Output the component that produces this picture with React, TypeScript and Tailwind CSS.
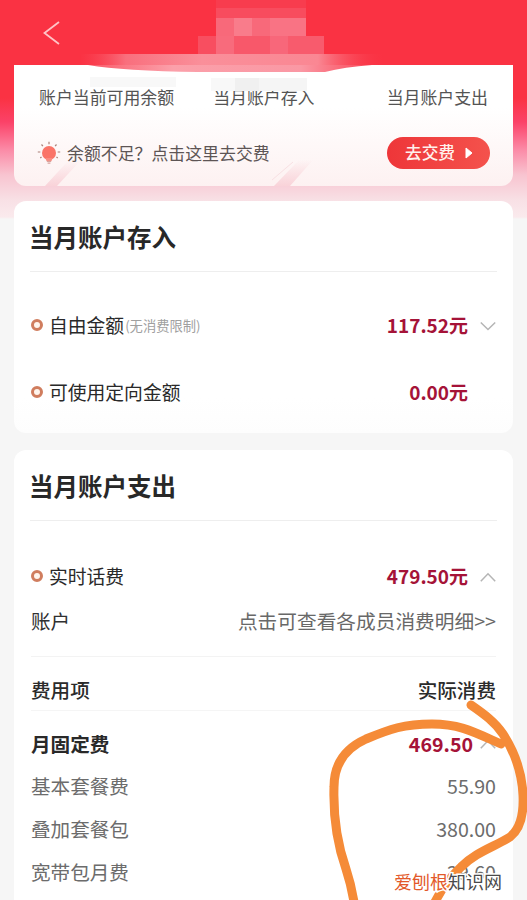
import type React from "react"

interface FeeItem {
  name: string
  amount: string
}

const feeItems: FeeItem[] = [
  { name: "基本套餐费", amount: "55.90" },
  { name: "叠加套餐包", amount: "380.00" },
  { name: "宽带包月费", amount: "29.60" },
]

const Chevron = ({ up = false, className = "" }: { up?: boolean; className?: string }) => (
  <svg width="16" height="10" viewBox="0 0 16 10" fill="none" className={className}>
    <path d={up ? "M.8 9.3 8 1.8 15.2 9.3" : "M.8 1.5 8 8.5 15.2 1.5"} stroke="#b5b5b5" strokeWidth="1.5" />
  </svg>
)

const Bulb = () => (
  <svg width="24" height="24" viewBox="0 0 24 24" fill="none">
    <circle cx="12" cy="12" r="7" fill="#fa7468" />
    <path d="M8.5 17h7l-1 3h-5z" fill="#fa8b80" />
    <path d="M9.8 20.3h4.4M10.6 22.2h2.8" stroke="#d8a39d" strokeWidth="1.2" />
    <path
      d="M12 .8v2.4M4.5 3.5l1.4 1.7M19.5 3.5l-1.4 1.7M.8 11h2.5M20.7 11h2.5M3.3 17l1.2-1M20.7 17l-1.2-1"
      stroke="#a98078"
      strokeWidth="1.2"
    />
  </svg>
)

// Masked-out area behind the page title
const Mosaic = () => (
  <svg className="absolute left-0 top-0" width="527" height="110" viewBox="0 0 527 110">
    <defs>
      <linearGradient id="smear" x1="80" x2="385" y1="0" y2="0" gradientUnits="userSpaceOnUse">
        <stop offset="0" stopColor="#f94a5b" stopOpacity="0" />
        <stop offset="0.15" stopColor="#f96f7d" />
        <stop offset="0.4" stopColor="#fa8f9a" />
        <stop offset="0.78" stopColor="#fa8793" />
        <stop offset="1" stopColor="#f93344" stopOpacity="0" />
      </linearGradient>
    </defs>
    <rect x="216" y="0" width="90" height="8" fill="#f83c4e" />
    <rect x="216" y="8" width="90" height="10" fill="#f84c5e" />
    <rect x="216" y="18" width="90" height="18" fill="#f8697a" />
    <rect x="234" y="18" width="18" height="18" fill="#f97c8b" />
    <rect x="270" y="18" width="36" height="18" fill="#f97384" />
    <rect x="198" y="36" width="126" height="18" fill="#f84e60" />
    <rect x="216" y="36" width="18" height="18" fill="#f86b7c" />
    <rect x="234" y="36" width="36" height="18" fill="#f8586a" />
    <rect x="270" y="36" width="18" height="18" fill="#f8677a" />
    <rect x="288" y="36" width="36" height="18" fill="#f85b6d" />
    <path d="M80 54H385V66H80Z" fill="url(#smear)" />
  </svg>
)

const Card = ({ className = "", children }: { className?: string; children: React.ReactNode }) => (
  <section className={`mx-[14px] rounded-xl px-4 ${className}`}>{children}</section>
)

const CardTitle = ({ children }: { children: React.ReactNode }) => (
  <h2 className="h-[71px] border-b border-[#eeeeee] text-[24.5px] font-bold leading-[71px] text-[#282828]">
    <span className="-ml-px">{children}</span>
  </h2>
)

interface AmountRowProps {
  label: string
  note?: string
  amount: string
  arrow?: "up" | "down"
}

const AmountRow = ({ label, note, amount, arrow }: AmountRowProps) => (
  <div className="flex h-[46px] items-center text-[#292929]">
    <span className="ml-[1px] mr-[6px] size-3 rounded-full border-3 border-[#d07d5e] bg-[#fff5ed]" />
    <span className="text-[18.8px]">{label}</span>
    {note && <span className="ml-px mt-[2px] text-[13.3px] text-[#a0a0a0]">{note}</span>}
    <span className="ml-auto text-[19px] font-bold text-[#a51338]">{amount}</span>
    <span className="ml-3 w-[17px]">{arrow && <Chevron up={arrow === "up"} className="mt-[2px]" />}</span>
  </div>
)

export default function App() {
  return (
    <div className="relative h-[900px] w-[527px] overflow-hidden bg-[#f6f6f6] font-['Noto_Sans_CJK_SC',sans-serif]">
      <div className="bg-[linear-gradient(#fa3243_0px,#fa3243_98px,#fb4268_122px,#fb8ba7_150px,#f8c4d0_175px,#f8e0e5_200px,#faeaed_217px,#f6f6f6_219px)]">
        <header className="h-[65px] pl-[43px] pt-[21px]">
          <svg width="17" height="24" viewBox="0 0 17 24" fill="none">
            <path d="M16 1 1.5 12 16 23" stroke="#ffc3c6" strokeWidth="1.8" />
          </svg>
        </header>
        <Mosaic />

        <section className="relative mx-[14px] h-[121px] overflow-hidden rounded-b-xl bg-[linear-gradient(#fff_0%,#fff_35%,#fdf1f1_100%)]">
          <svg className="absolute left-0 top-0" width="499" height="121" viewBox="0 0 499 121">
            <defs>
              <linearGradient id="streak" x1="0" y1="0" x2="0" y2="1">
                <stop offset="0" stopColor="#f9d3d9" stopOpacity="0" />
                <stop offset="1" stopColor="#f9d3d9" />
              </linearGradient>
              <linearGradient id="edge" x1="0" y1="0" x2="1" y2="0">
                <stop offset="0" stopColor="#fa5a69" />
                <stop offset="0.3" stopColor="#fba0aa" />
                <stop offset="0.75" stopColor="#fa98a4" />
                <stop offset="1" stopColor="#fa4455" />
              </linearGradient>
            </defs>
            <path d="M31 121 54 96H66L43 121Z" fill="url(#streak)" />
            <path d="M260 121 285 95H299L276 121Z" fill="url(#streak)" />
            <path d="M258 115 279 97" stroke="#f8e0e3" />
            {/* lower edge of the masked band */}
            <path d="M74 0H358Q330 2 311 7H184Q110 6 74 0Z" fill="url(#edge)" />
            <path d="M76 12H162V22H76Z" fill="#f8f8f8" />
          </svg>
          <div className="relative flex h-[63px] items-center text-[16.9px] text-[#545454]">
            <span className="ml-[25px]">账户当前可用余额</span>
            <span className="relative ml-[39px]">
              当月账户存入
              <span className="absolute -left-0.5 -top-[6px] flex h-[13px]">
                <i className="w-6 bg-[#f8f8f8]" />
                <i className="w-6 bg-[#f0f0f0]" />
                <i className="w-12 bg-[#f5f5f5]" />
              </span>
            </span>
            <span className="ml-auto mr-[25px]">当月账户支出</span>
          </div>
          <div className="relative flex h-[50px] items-center pl-[23px] pr-[23px] text-[16.9px] text-[#5d5555]">
            <Bulb />
            <span className="ml-[6px]">余额不足？点击这里去交费</span>
            <button className="ml-auto flex h-8 w-[103px] items-center rounded-full bg-[linear-gradient(90deg,#ee3639,#f4524c)] pl-[18px] text-[16.7px] font-medium text-[#fff1ec]">
              去交费
              <svg className="ml-[10px]" width="8" height="12" viewBox="0 0 8 12">
                <path d="M1 1v10l6-5z" fill="#fff" stroke="#fff" strokeLinejoin="round" />
              </svg>
            </button>
          </div>
        </section>

        <div className="h-[15px]" />
        <Card className="h-[232px] bg-[linear-gradient(#fff_85%,#fdfdfd)]">
          <CardTitle>当月账户存入</CardTitle>
          <div className="pt-[30px]">
            <AmountRow label="自由金额" note="(无消费限制)" amount="117.52元" arrow="down" />
            <div className="h-[21px]" />
            <AmountRow label="可使用定向金额" amount="0.00元" />
          </div>
        </Card>
      </div>

      <Card className="mt-[17px] h-[480px] bg-white">
        <CardTitle>当月账户支出</CardTitle>
        <div className="pt-8">
          <AmountRow label="实时话费" amount="479.50元" arrow="up" />
        </div>
        <div className="ml-[1px] mr-px text-[19.6px]">
          <div className="flex h-[58px] justify-between border-b border-[#f3f3f3] leading-[44px]">
            <span className="text-[#303030]">账户</span>
            <span className="text-[19.7px] text-[#686868]">点击可查看各成员消费明细&gt;&gt;</span>
          </div>
          <div className="flex h-[54px] justify-between border-b border-[#f5f5f5] pt-[10px] font-medium leading-[46px] text-[#2b2b2b]">
            <span>费用项</span>
            <span>实际消费</span>
          </div>
          <div className="flex h-[53px] items-center pt-[13px] font-bold">
            <span className="text-[#292929]">月固定费</span>
            <span className="ml-auto text-[#a51338]">469.50</span>
            <Chevron up className="ml-[7px]" />
          </div>
          {feeItems.map((item) => (
            <div key={item.name} className="flex h-[43px] items-center justify-between pt-px text-[#6c6c6c]">
              <span>{item.name}</span>
              <span>{item.amount}</span>
            </div>
          ))}
        </div>
      </Card>

      {/* Hand-drawn marker */}
      <svg className="absolute left-[310px] top-[690px]" width="217" height="210" viewBox="0 0 217 210" fill="none">
        <path
          d="M191 54C164 42 150 34 122 34C94 34 80 39 56 49C36 58 24 74 24 97C23 130 29 159 36 179C40 191 42 200 44 212M161 15C174 24 185 32 193 44C204 61 212 83 213 105C214 126 209 140 200 147C184 157 166 162 151 177C139 188 132 198 125 212"
          stroke="#f58b38"
          strokeWidth="9"
          strokeLinecap="round"
          strokeLinejoin="round"
        />
      </svg>

      <div className="absolute left-[394px] top-[867px] text-[18px] leading-[28px] text-[#4a4a4a] [-webkit-text-stroke:3px_white] [paint-order:stroke_fill]">
        <span className="text-[#e3592a]">爱刨根</span>知识网
      </div>
    </div>
  )
}
